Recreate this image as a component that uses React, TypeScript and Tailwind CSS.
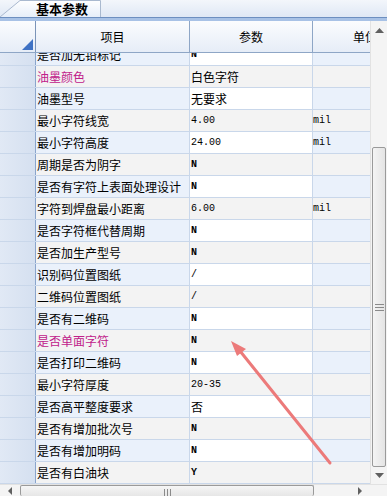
import React from 'react';

type Row = { name: string; value: string; unit?: string; pink?: boolean; cjk?: boolean };

const rows: Row[] = [
  { name: '是否加无铅标记', value: 'N' },
  { name: '油墨颜色', value: '白色字符', pink: true, cjk: true },
  { name: '油墨型号', value: '无要求', cjk: true },
  { name: '最小字符线宽', value: '4.00', unit: 'mil' },
  { name: '最小字符高度', value: '24.00', unit: 'mil' },
  { name: '周期是否为阴字', value: 'N' },
  { name: '是否有字符上表面处理设计', value: 'N' },
  { name: '字符到焊盘最小距离', value: '6.00', unit: 'mil' },
  { name: '是否字符框代替周期', value: 'N' },
  { name: '是否加生产型号', value: 'N' },
  { name: '识别码位置图纸', value: '/' },
  { name: '二维码位置图纸', value: '/' },
  { name: '是否有二维码', value: 'N' },
  { name: '是否单面字符', value: 'N', pink: true },
  { name: '是否打印二维码', value: 'N' },
  { name: '最小字符厚度', value: '20-35' },
  { name: '是否高平整度要求', value: '否', cjk: true },
  { name: '是否有增加批次号', value: 'N' },
  { name: '是否有增加明码', value: 'N' },
  { name: '是否有白油块', value: 'Y' },
];

const cjk = "font-['SimSun','Noto_Sans_CJK_SC',sans-serif]";
const mono = "font-['Liberation_Mono',monospace]";

function GridRow({ row, i }: { row: Row; i: number }) {
  const gray = i % 2 === 1;
  const side = gray ? 'bg-[#f3f3f3]' : 'bg-[#eaf1fb]';
  const mid = gray ? 'bg-[#f3f3f3]' : 'bg-white';
  const letter = row.value === 'N' || row.value === 'Y';
  return (
    <div className="flex h-[22px] shrink-0 border-b border-[#c9d7ea]">
      <div className="w-[36px] shrink-0 border-r border-[#8aa5cc] bg-gradient-to-r from-[#e1e9f5] to-[#d5e0f0]" />
      <div
        className={`w-[154px] shrink-0 border-r border-[#c9d7ea] pl-[1px] flex items-center text-[12px] ${cjk} ${side} ${
          row.pink ? 'text-[#c0208a]' : 'text-black'
        }`}
      >
        {row.name}
      </div>
      <div
        className={`w-[123px] shrink-0 border-r border-[#c9d7ea] pl-[1px] flex items-center text-black ${mid} ${
          row.cjk ? `${cjk} text-[12px]` : `${mono} text-[10px] ${letter ? 'font-bold' : ''}`
        }`}
      >
        {row.value}
      </div>
      <div className={`w-[104px] shrink-0 flex items-center text-[10px] text-black ${mono} ${side}`}>
        {row.unit ?? ''}
      </div>
    </div>
  );
}

export default function App() {
  return (
    <div className="relative w-[387px] h-[496px] overflow-hidden bg-white flex flex-col select-none">
      {/* tab strip */}
      <div className="h-[17px] shrink-0 flex bg-gradient-to-b from-[#f3f6fb] to-[#dfe8f5]">
        <div className="relative w-[101px] h-[17px]">
          <svg className="absolute inset-0" width="101" height="17" viewBox="0 0 101 17">
            <defs>
              <linearGradient id="tabg" x1="0" y1="0" x2="0" y2="1">
                <stop offset="0" stopColor="#ffffff" />
                <stop offset="1" stopColor="#e6eef9" />
              </linearGradient>
            </defs>
            <path d="M0 17 L20 0.5 L100 0.5 L100 17 Z" fill="url(#tabg)" />
            <path d="M0 17 L20 0.5 L100.5 0.5 L100.5 17" fill="none" stroke="#a9b9cf" strokeWidth="1" />
          </svg>
          <span className={`relative flex h-full items-center pl-[36px] text-[13px] font-bold text-black ${cjk}`}>基本参数</span>
        </div>
        <div className="flex-1" />
      </div>
      <div className="h-[4px] shrink-0 border-t border-[#6d8fc0] bg-[#a8c2e6]" />

      <div className="flex flex-1 min-h-0">
        {/* grid */}
        <div className="w-[370px] flex flex-col overflow-hidden">
          <div className="flex h-[32px] shrink-0 border-b border-[#8ea6c6] bg-gradient-to-b from-[#fbfcfe] to-[#e6edf7] text-[12px] text-black">
            <div className="relative w-[36px] shrink-0 border-r border-[#7b94b8]">
              <svg className="absolute right-[2px] bottom-[2px]" width="11" height="11" viewBox="0 0 11 11">
                <path d="M11 0 L11 11 L0 11 Z" fill="#3f72c4" />
              </svg>
            </div>
            <div className={`w-[154px] shrink-0 border-r border-[#8ea6c6] flex items-center justify-center ${cjk}`}>项目</div>
            <div className={`w-[123px] shrink-0 border-r border-[#8ea6c6] flex items-center justify-center ${cjk}`}>参数</div>
            <div className={`w-[104px] shrink-0 flex items-center justify-center ${cjk}`}>单位</div>
          </div>
          <div className="flex-1 min-h-0 overflow-hidden">
            <div className="-mt-[9px] flex flex-col">
              {rows.map((r, i) => (
                <GridRow key={r.name} row={r} i={i} />
              ))}
            </div>
          </div>
        </div>

        {/* vertical scrollbar */}
        <div className="w-[17px] flex flex-col bg-[#f4f4f4] border-l border-[#e2e2e2]">
          <div className="h-[18px] flex items-center justify-center">
            <svg width="9" height="5" viewBox="0 0 9 5"><path d="M0 5 L4.5 0 L9 5 Z" fill="#606060" /></svg>
          </div>
          <div className="h-[108px]" />
          <div className="flex-1 mx-[1px] rounded-[2px] border border-[#9a9a9a] bg-gradient-to-r from-[#f4f4f4] to-[#e4e4e4] flex items-center justify-center">
            <div className="flex flex-col gap-[2px]">
              <div className="w-[9px] h-px bg-[#8a8a8a]" />
              <div className="w-[9px] h-px bg-[#8a8a8a]" />
              <div className="w-[9px] h-px bg-[#8a8a8a]" />
            </div>
          </div>
          <div className="h-[17px] flex items-center justify-center">
            <svg width="9" height="5" viewBox="0 0 9 5"><path d="M0 0 L9 0 L4.5 5 Z" fill="#606060" /></svg>
          </div>
        </div>
      </div>

      {/* horizontal scrollbar */}
      <div className="h-[12px] shrink-0 flex bg-[#f4f4f4] border-t border-[#e2e2e2]">
        <div className="w-[20px] flex items-center justify-center">
          <svg width="4" height="8" viewBox="0 0 4 8"><path d="M4 0 L0 4 L4 8 Z" fill="#606060" /></svg>
        </div>
        <div className="w-[294px] rounded-[2px] border border-[#9a9a9a] border-b-0 bg-gradient-to-b from-[#f6f6f6] to-[#e6e6e6] flex justify-center pt-[3px]">
          <div className="flex gap-[2px]">
            <div className="w-px h-[8px] bg-[#8a8a8a]" />
            <div className="w-px h-[8px] bg-[#8a8a8a]" />
            <div className="w-px h-[8px] bg-[#8a8a8a]" />
          </div>
        </div>
        <div className="flex-1 flex items-center justify-end pr-[25px]">
          <svg width="4" height="8" viewBox="0 0 4 8"><path d="M0 0 L4 4 L0 8 Z" fill="#606060" /></svg>
        </div>
      </div>

      {/* red annotation arrow */}
      <svg className="absolute left-0 top-0 pointer-events-none" width="387" height="496" viewBox="0 0 387 496">
        <line x1="330" y1="463" x2="240" y2="351" stroke="#ec7a7a" strokeWidth="3" strokeLinecap="round" />
        <path d="M231 341 L246 349 L237 356 Z" fill="#ec7a7a" />
      </svg>
    </div>
  );
}
